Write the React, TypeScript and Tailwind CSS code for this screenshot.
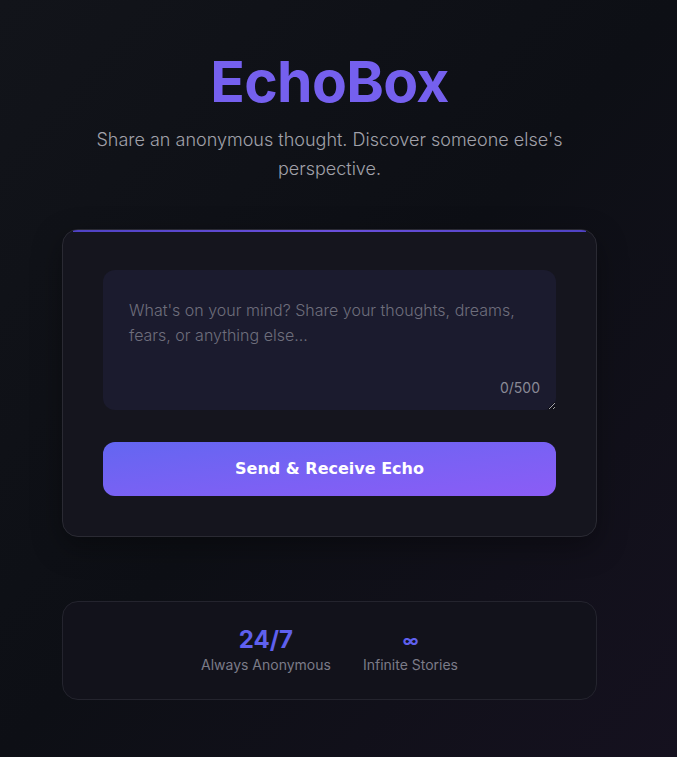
import { useState } from "react";

export default function App() {
  const [text, setText] = useState("");

  return (
    <div
      className="min-h-[757px] w-full bg-gradient-to-br from-[#12141a] via-[#0d0f15] to-[#15111f] pr-[18px] pt-[51px] pb-[58px]"
      style={{ fontFamily: "Inter, 'Noto Sans', sans-serif" }}
    >
      <div className="mx-auto flex w-[535px] flex-col items-center">
        <h1 className="pt-[2px] text-[57px] font-bold leading-[58px] tracking-[-0.7px] text-[#7560ee]">
          EchoBox
        </h1>
        <p className="mt-[14px] max-w-lg text-center text-[18px] font-light leading-[29px] text-[#a1a1aa]">
          Share an anonymous thought. Discover someone else's perspective.
        </p>

        {/* composer */}
        <div className="relative mt-[46px] w-full overflow-hidden rounded-2xl border border-[#2a2a33] bg-[#15151e] px-10 pt-10 pb-10 shadow-[0_10px_30px_rgba(0,0,0,0.35)]">
          <div className="absolute left-2.5 right-2.5 top-0 h-[2px] bg-gradient-to-r from-[#4f42c4] via-[#6a4fdc] to-[#4f42c4]" />
          <div className="relative">
            <textarea
              value={text}
              onChange={(e) => setText(e.target.value.slice(0, 500))}
              placeholder="What's on your mind? Share your thoughts, dreams, fears, or anything else..."
              className="block h-[140px] w-full resize-y rounded-xl bg-[#1b1b2e] px-[26px] pt-[28px] text-[16px] font-light leading-[25px] text-gray-200 outline-none placeholder:text-[#6e6e7c]"
            />
            <span className="absolute right-4 bottom-[12px] text-[14px] text-[#8a8a96]">
              {text.length}/500
            </span>
          </div>
          <button
            className="mt-8 h-[54px] w-full rounded-xl bg-gradient-to-br from-[#6366f1] to-[#8b5cf6] text-[16px] font-bold text-white"
            style={{ fontFamily: "'DejaVu Sans', Verdana, sans-serif" }}
          >
            Send &amp; Receive Echo
          </button>
        </div>

        {/* stats */}
        <div className="mt-[64px] flex h-[99px] w-full items-center justify-center gap-8 rounded-2xl border border-[#24242e] bg-[#12121b]">
          <div className="flex flex-col items-center">
            <span className="text-[24px] font-bold leading-[28px] text-[#5f60ee]">24/7</span>
            <span className="mt-[1px] text-[14px] leading-5 text-[#7b7b88]">Always Anonymous</span>
          </div>
          <div className="flex flex-col items-center">
            <span className="text-[16px] font-bold leading-[28px] text-[#5f60ee]">∞</span>
            <span className="mt-[1px] text-[14px] leading-5 text-[#7b7b88]">Infinite Stories</span>
          </div>
        </div>
      </div>
    </div>
  );
}
